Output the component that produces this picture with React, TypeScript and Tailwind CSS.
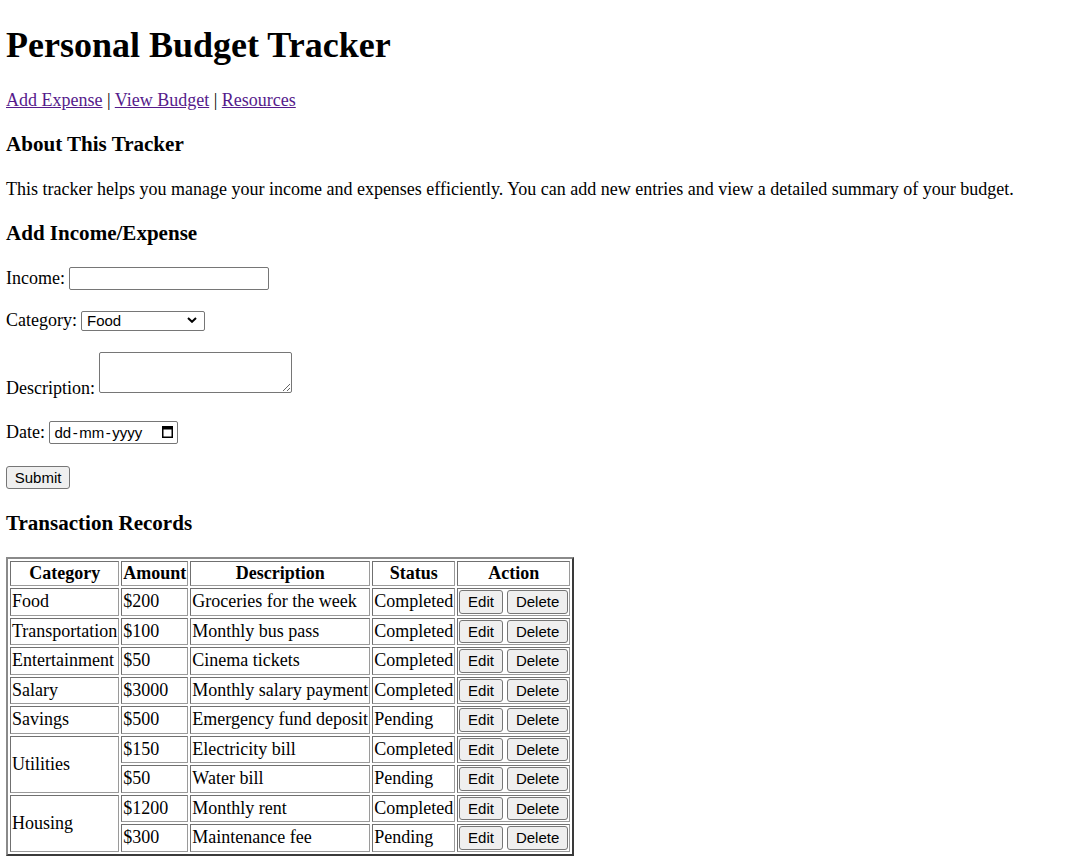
import React from "react";

const rows: { cat?: string; span?: number; amt: string; desc: string; status: string }[] = [
  { cat: "Food", amt: "$200", desc: "Groceries for the week", status: "Completed" },
  { cat: "Transportation", amt: "$100", desc: "Monthly bus pass", status: "Completed" },
  { cat: "Entertainment", amt: "$50", desc: "Cinema tickets", status: "Completed" },
  { cat: "Salary", amt: "$3000", desc: "Monthly salary payment", status: "Completed" },
  { cat: "Savings", amt: "$500", desc: "Emergency fund deposit", status: "Pending" },
  { cat: "Utilities", span: 2, amt: "$150", desc: "Electricity bill", status: "Completed" },
  { amt: "$50", desc: "Water bill", status: "Pending" },
  { cat: "Housing", span: 2, amt: "$1200", desc: "Monthly rent", status: "Completed" },
  { amt: "$300", desc: "Maintenance fee", status: "Pending" },
];

const td = "border border-t-[#707070] border-l-[#707070] border-b-[#9a9a9a] border-r-[#9a9a9a] p-[1px] align-middle";
const btn =
  "font-['Liberation_Sans',sans-serif] text-[15px] leading-[normal] bg-[#efefef] border border-[#767676] rounded-[3px] px-[7.75px] py-[2.25px] text-black";

export default function App() {
  return (
    <div className="px-[6px] pb-4 font-['Liberation_Serif',serif] text-[18px] leading-[normal] text-black bg-white">
      <h1 className="text-[36px] font-bold pt-[24.2px]">Personal Budget Tracker</h1>
      <p className="mt-[24px]">
        <a href="#" className="text-[#551a8b] underline">Add Expense</a> |{" "}
        <a href="#" className="text-[#551a8b] underline">View Budget</a> |{" "}
        <a href="#" className="text-[#551a8b] underline">Resources</a>
      </p>
      <h3 className="text-[21.06px] font-bold mt-[21.2px]">About This Tracker</h3>
      <p className="mt-[21.2px]">
        This tracker helps you manage your income and expenses efficiently. You can add new entries and view a detailed summary of your budget.
      </p>
      <h3 className="text-[21.06px] font-bold mt-[21.2px]">Add Income/Expense</h3>
      <form>
        <div className="flex items-baseline gap-[4.5px] mt-[21.5px]">
          <label>Income:</label>
          <input
            type="text"
            className="block border border-[#767676] rounded-[2px] w-[200px] h-[23px] px-[2px] text-[15px] font-['Liberation_Sans',sans-serif] bg-white"
          />
        </div>
        <div className="flex items-baseline gap-[4.5px] mt-[20.2px]">
          <label>Category:</label>
          <div className="relative">
            <select className="block appearance-none border border-[#767676] rounded-[2px] w-[124px] h-[20px] pl-[4.5px] text-[15px] leading-[normal] font-['Liberation_Sans',sans-serif] bg-white text-black">
              <option>Food</option>
              <option>Transportation</option>
              <option>Entertainment</option>
              <option>Salary</option>
              <option>Savings</option>
              <option>Utilities</option>
              <option>Housing</option>
            </select>
            <svg
              className="absolute right-[8px] top-[6.5px] pointer-events-none"
              width="10"
              height="6"
              viewBox="0 0 10 6"
            >
              <path d="M1 1 L5 4.8 L9 1" fill="none" stroke="#000" strokeWidth="2" />
            </svg>
          </div>
        </div>
        <div className="flex items-end gap-[4.5px] mt-[21px]">
          <label>Description:</label>
          <textarea className="block border border-[#767676] rounded-[2px] w-[192.5px] h-[41px] mb-[6px] bg-white" />
        </div>
        <div className="flex items-baseline gap-[4.5px] mt-[21.5px]">
          <label>Date:</label>
          <div className="flex items-center justify-between border border-[#767676] rounded-[2px] w-[129px] h-[23px] pl-[4px] pr-[4px] text-[15px] font-['Liberation_Sans',sans-serif] bg-white">
            <span>
              dd<span className="mx-[1.5px]">-</span>mm<span className="mx-[1.5px]">-</span>yyyy
            </span>
            <svg width="11" height="12" viewBox="0 0 11 12">
              <rect x="0.75" y="0.75" width="9.5" height="10.5" fill="none" stroke="#000" strokeWidth="1.5" />
              <rect x="0" y="0" width="11" height="3.5" fill="#000" />
            </svg>
          </div>
        </div>
        <div className="mt-[22px]">
          <button type="button" className={btn + " block"}>Submit</button>
        </div>
      </form>
      <h3 className="text-[21.06px] font-bold mt-[21.8px]">Transaction Records</h3>
      <table className="mt-[21px] border-separate border-spacing-[2px] border-2 border-t-[#8a8a8a] border-l-[#8a8a8a] border-r-[#3a3a3a] border-b-[#3a3a3a]">
        <thead>
          <tr>
            {["Category", "Amount", "Description", "Status", "Action"].map((h) => (
              <th key={h} className={td + " font-bold text-center"}>{h}</th>
            ))}
          </tr>
        </thead>
        <tbody>
          {rows.map((r, i) => (
            <tr key={i}>
              {r.cat && (
                <td className={td} rowSpan={r.span}>{r.cat}</td>
              )}
              <td className={td}>{r.amt}</td>
              <td className={td}>{r.desc}</td>
              <td className={td}>{r.status}</td>
              <td className={td + " whitespace-nowrap"}>
                <button type="button" className={btn}>Edit</button>{" "}
                <button type="button" className={btn}>Delete</button>
              </td>
            </tr>
          ))}
        </tbody>
      </table>
    </div>
  );
}
